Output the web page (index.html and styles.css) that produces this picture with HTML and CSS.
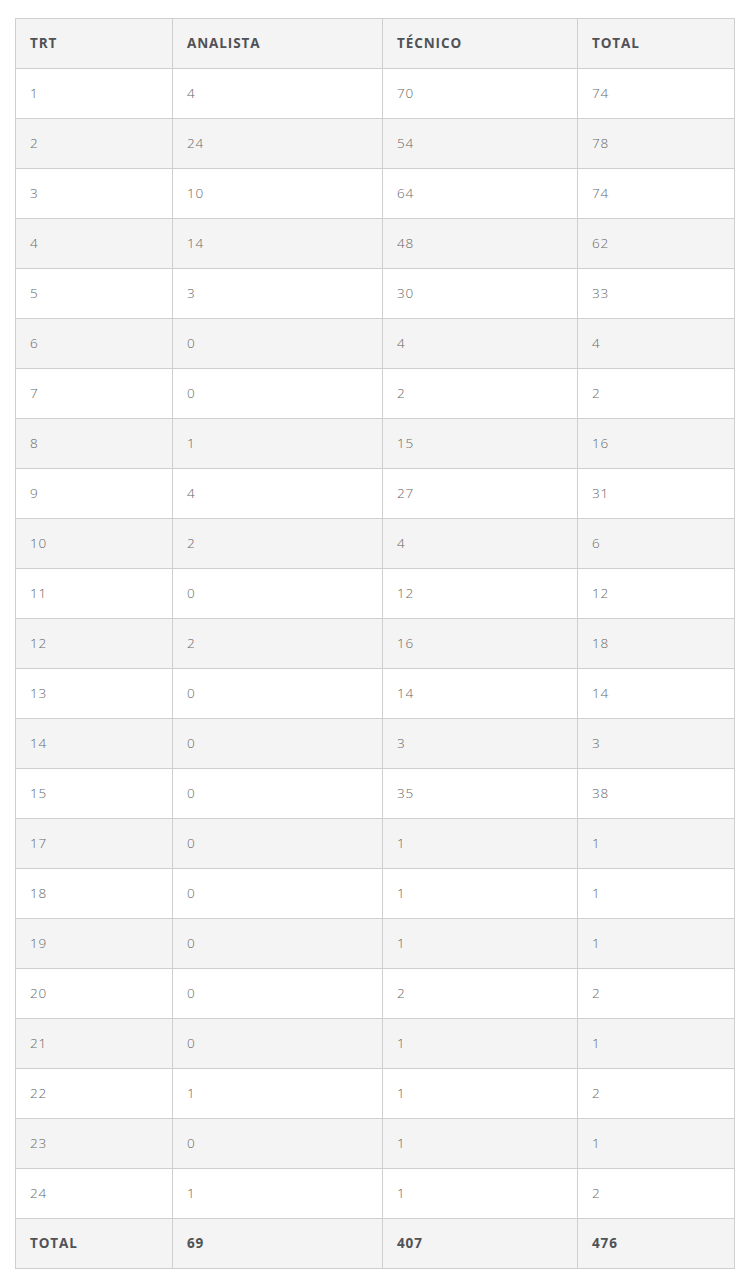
FILE: index.html
```html
<!DOCTYPE html>
<html lang="pt">
<head>
<meta charset="utf-8">
<link rel="stylesheet" href="styles.css">
</head>
<body>
<table class="data">
<colgroup><col class="c1"><col class="c2"><col class="c3"><col class="c4"></colgroup>
<thead>
<tr><th>TRT</th><th>ANALISTA</th><th>TÉCNICO</th><th>TOTAL</th></tr>
</thead>
<tbody>
<tr><td>1</td><td>4</td><td>70</td><td>74</td></tr>
<tr><td>2</td><td>24</td><td>54</td><td>78</td></tr>
<tr><td>3</td><td>10</td><td>64</td><td>74</td></tr>
<tr><td>4</td><td>14</td><td>48</td><td>62</td></tr>
<tr><td>5</td><td>3</td><td>30</td><td>33</td></tr>
<tr><td>6</td><td>0</td><td>4</td><td>4</td></tr>
<tr><td>7</td><td>0</td><td>2</td><td>2</td></tr>
<tr><td>8</td><td>1</td><td>15</td><td>16</td></tr>
<tr><td>9</td><td>4</td><td>27</td><td>31</td></tr>
<tr><td>10</td><td>2</td><td>4</td><td>6</td></tr>
<tr><td>11</td><td>0</td><td>12</td><td>12</td></tr>
<tr><td>12</td><td>2</td><td>16</td><td>18</td></tr>
<tr><td>13</td><td>0</td><td>14</td><td>14</td></tr>
<tr><td>14</td><td>0</td><td>3</td><td>3</td></tr>
<tr><td>15</td><td>0</td><td>35</td><td>38</td></tr>
<tr><td>17</td><td>0</td><td>1</td><td>1</td></tr>
<tr><td>18</td><td>0</td><td>1</td><td>1</td></tr>
<tr><td>19</td><td>0</td><td>1</td><td>1</td></tr>
<tr><td>20</td><td>0</td><td>2</td><td>2</td></tr>
<tr><td>21</td><td>0</td><td>1</td><td>1</td></tr>
<tr><td>22</td><td>1</td><td>1</td><td>2</td></tr>
<tr><td>23</td><td>0</td><td>1</td><td>1</td></tr>
<tr><td>24</td><td>1</td><td>1</td><td>2</td></tr>
<tr class="total"><td>TOTAL</td><td>69</td><td>407</td><td>476</td></tr>
</tbody>
</table>
</body>
</html>
```
FILE: styles.css
```css
html, body {
  margin: 0;
  background: #ffffff;
}
body {
  padding: 18px 5px 0 15px;
  font-family: "Open Sans", "Liberation Sans", sans-serif;
}
.data {
  border-collapse: collapse;
  width: 719px;
  table-layout: fixed;
}
.c1 { width: 157px; }
.c2 { width: 210px; }
.c3 { width: 195px; }
.c4 { width: 157px; }
.data th, .data td {
  border: 1px solid #cfcfcf;
  height: 50px;
  box-sizing: border-box;
  padding: 0 14px 2px;
  text-align: left;
  vertical-align: middle;
  font-size: 13.5px;
}
.data th {
  font-weight: 700;
  color: #4f5256;
  background: #f4f4f4;
  letter-spacing: 0.9px;
}
.data td {
  font-weight: 300;
  color: #686868;
  letter-spacing: 0.8px;
}
.data tbody tr:nth-child(even) td {
  background: #f4f4f4;
}
.data tr.total td {
  font-weight: 700;
  color: #4f5256;
  background: #f4f4f4;
  letter-spacing: 0.9px;
}
```
